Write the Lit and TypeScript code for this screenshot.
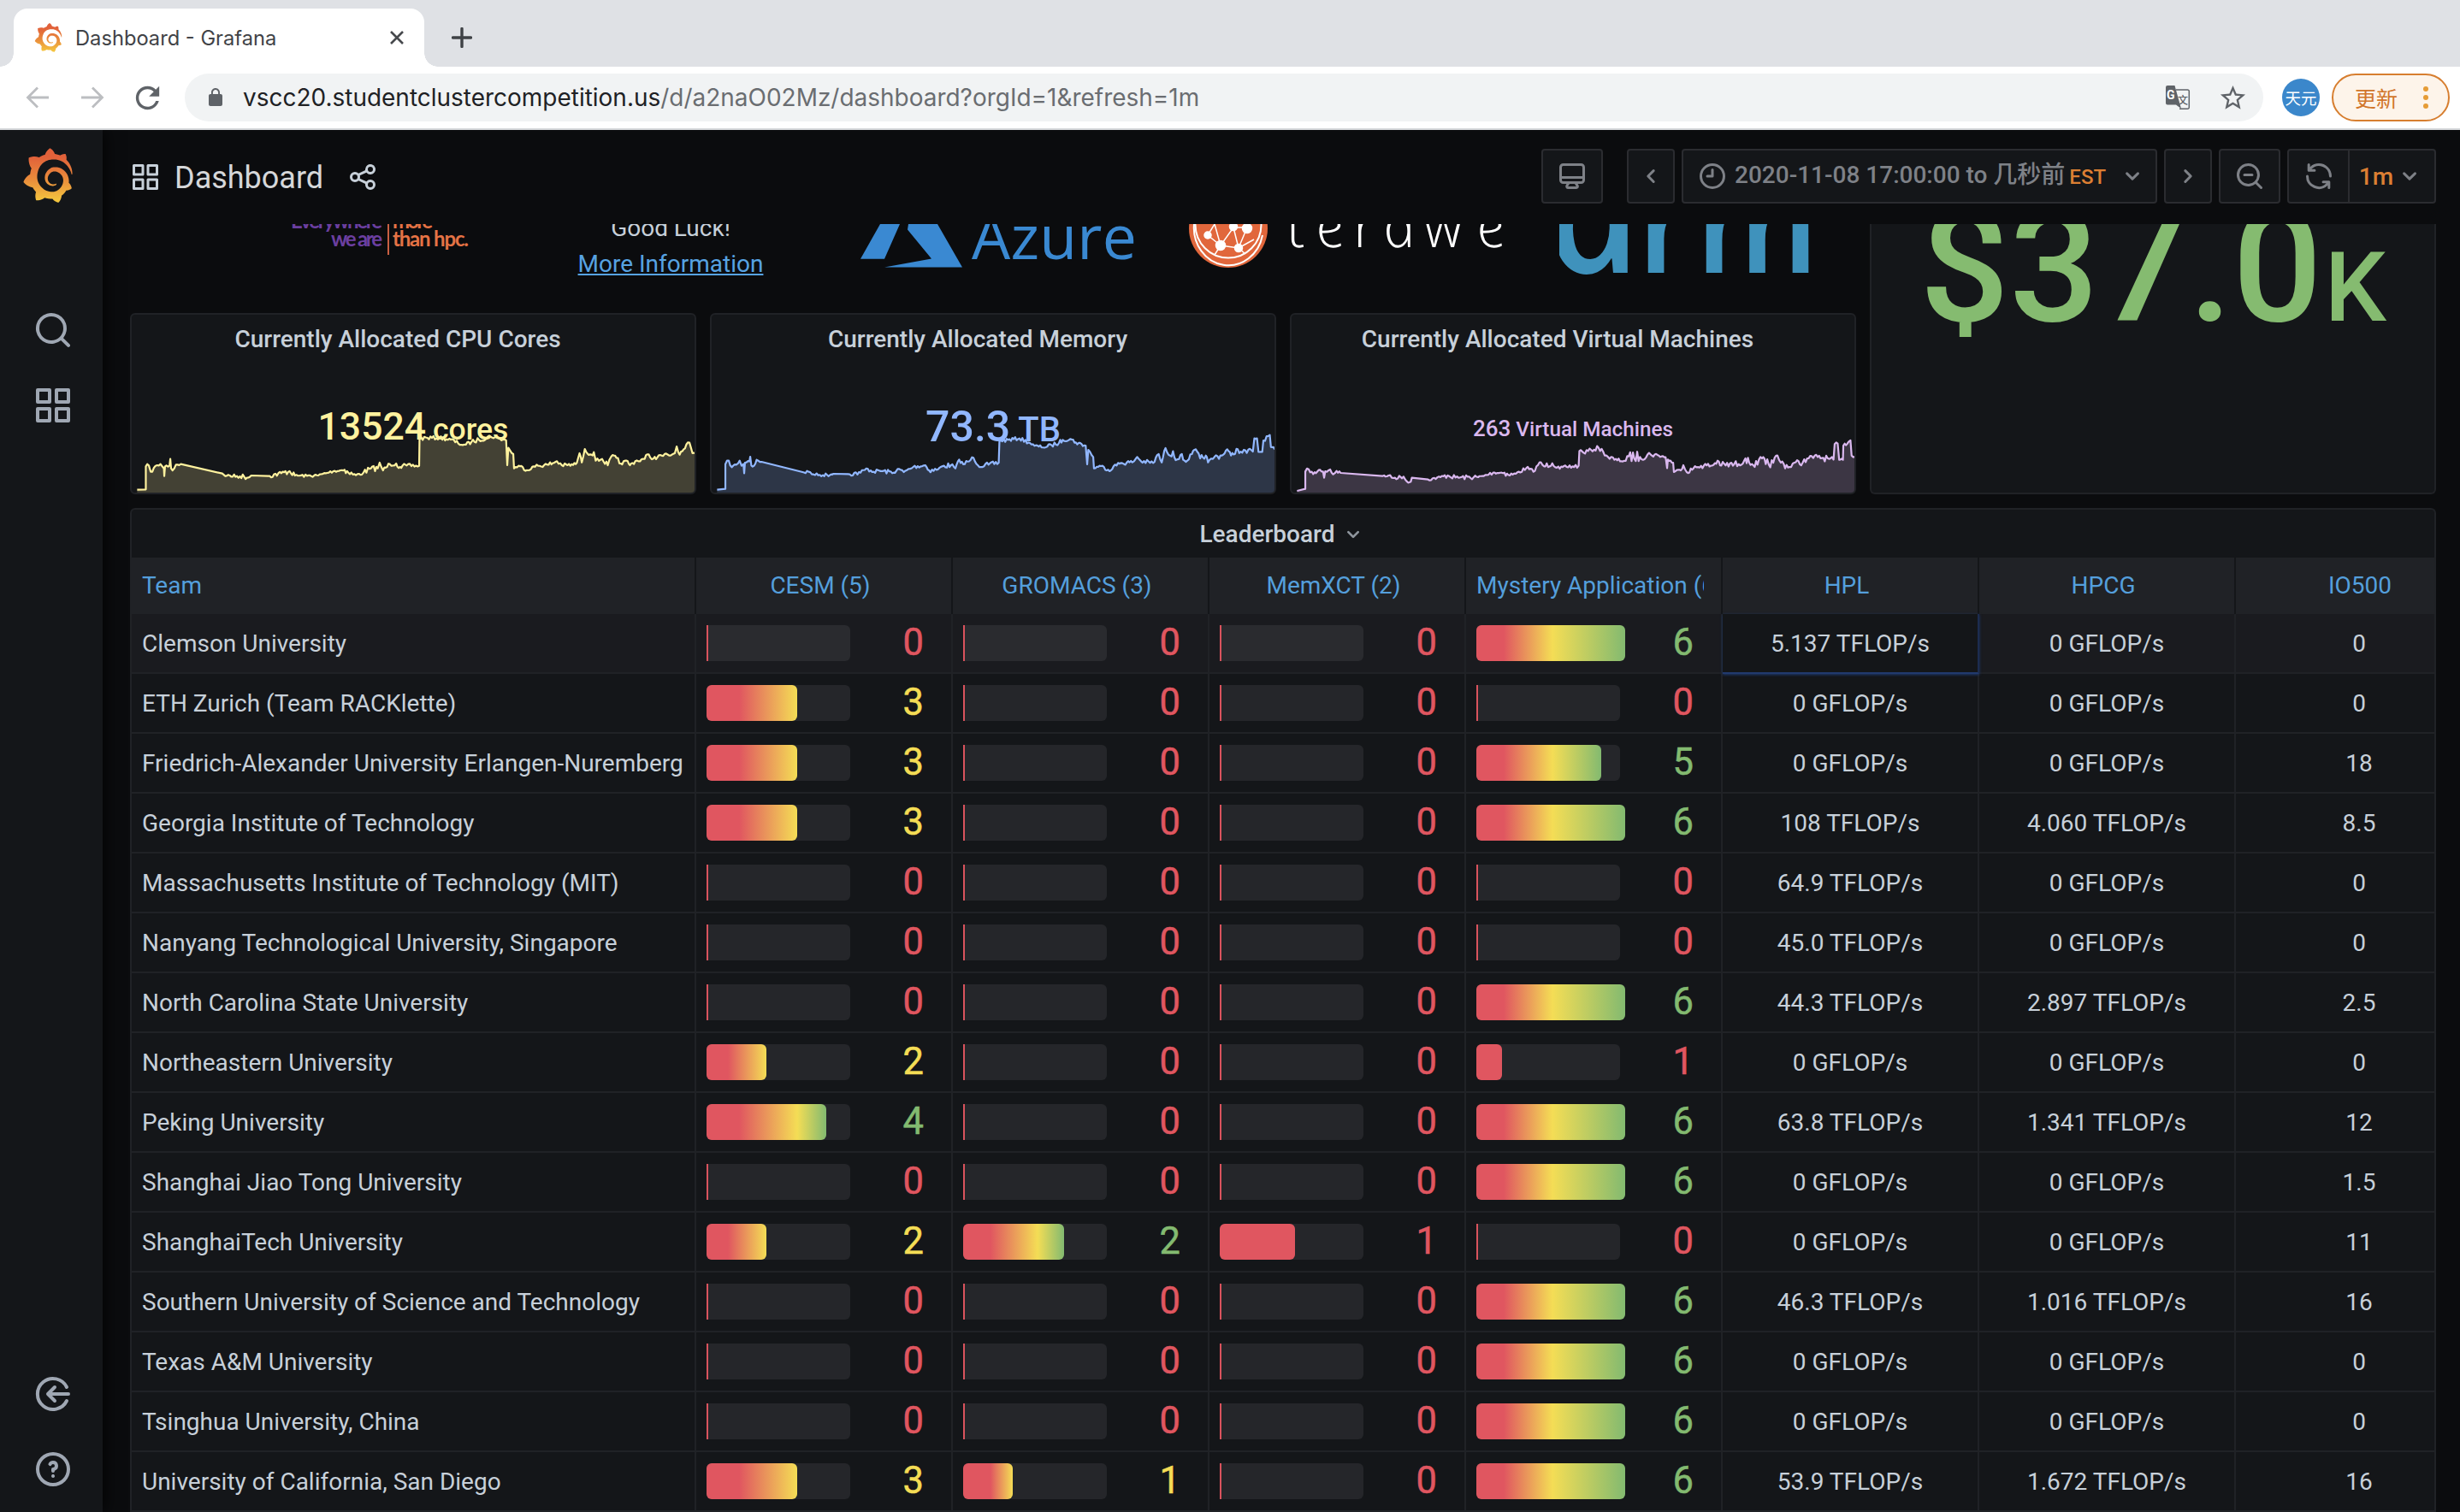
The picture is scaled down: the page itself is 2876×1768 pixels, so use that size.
import { LitElement, html, css, nothing } from 'lit';
import { customElement, property } from 'lit/decorators.js';

const ICONS: Record<string, string> = {
  apps: 'M10,13H3a1,1,0,0,0-1,1v7a1,1,0,0,0,1,1h7a1,1,0,0,0,1-1V14A1,1,0,0,0,10,13ZM9,20H4V15H9ZM21,2H14a1,1,0,0,0-1,1v7a1,1,0,0,0,1,1h7a1,1,0,0,0,1-1V3A1,1,0,0,0,21,2ZM20,9H15V4h5Zm1,4H14a1,1,0,0,0-1,1v7a1,1,0,0,0,1,1h7a1,1,0,0,0,1-1V14A1,1,0,0,0,21,13Zm-1,7H15V15h5ZM10,2H3A1,1,0,0,0,2,3v7a1,1,0,0,0,1,1h7a1,1,0,0,0,1-1V3A1,1,0,0,0,10,2ZM9,9H4V4H9Z',
  search: 'M21.71,20.29,18,16.61A9,9,0,1,0,16.61,18l3.68,3.68a1,1,0,0,0,1.42,0A1,1,0,0,0,21.71,20.29ZM11,18a7,7,0,1,1,7-7A7,7,0,0,1,11,18Z',
  zoomOut: 'M21.71,20.29,18,16.61A9,9,0,1,0,16.61,18l3.68,3.68a1,1,0,0,0,1.42,0A1,1,0,0,0,21.71,20.29ZM11,18a7,7,0,1,1,7-7A7,7,0,0,1,11,18ZM14,10H8a1,1,0,0,0,0,2h6a1,1,0,0,0,0-2Z',
  help: 'M11.29,15.29a1.58,1.58,0,0,0-.12.15.76.76,0,0,0-.09.18.64.64,0,0,0-.06.18,1.36,1.36,0,0,0,0,.2.84.84,0,0,0,.08.38.9.9,0,0,0,.54.54.94.94,0,0,0,.76,0,.9.9,0,0,0,.54-.54A1,1,0,0,0,13,16a1,1,0,0,0-.29-.71A1,1,0,0,0,11.29,15.29ZM12,2A10,10,0,1,0,22,12,10,10,0,0,0,12,2Zm0,18a8,8,0,1,1,8-8A8,8,0,0,1,12,20ZM12,7A3,3,0,0,0,9.4,8.5a1,1,0,1,0,1.73,1A1,1,0,0,1,12,9a1,1,0,0,1,0,2,1,1,0,0,0-1,1v1a1,1,0,0,0,2,0v-.18A3,3,0,0,0,12,7Z',
  share: 'M18,14a4,4,0,0,0-3.08,1.48l-5.1-2.35a3.64,3.64,0,0,0,0-2.26l5.1-2.35A4,4,0,1,0,14,6a4.17,4.17,0,0,0,.07.71L8.79,9.14a4,4,0,1,0,0,5.72l5.28,2.43A4.17,4.17,0,0,0,14,18a4,4,0,1,0,4-4ZM18,4a2,2,0,1,1-2,2A2,2,0,0,1,18,4ZM6,14a2,2,0,1,1,2-2A2,2,0,0,1,6,14Zm12,6a2,2,0,1,1,2-2A2,2,0,0,1,18,20Z',
  clock: 'M12,2A10,10,0,1,0,22,12,10,10,0,0,0,12,2Zm0,18a8,8,0,1,1,8-8A8,8,0,0,1,12,20ZM12,6a1,1,0,0,0-1,1v4H8a1,1,0,0,0,0,2h4a1,1,0,0,0,1-1V7A1,1,0,0,0,12,6Z',
  monitor: 'M19,2H5A3,3,0,0,0,2,5V15a3,3,0,0,0,3,3H7.64l-.58,1a2,2,0,0,0,0,2,2,2,0,0,0,1.75,1h6.46A2,2,0,0,0,17,21a2,2,0,0,0,0-2l-.59-1H19a3,3,0,0,0,3-3V5A3,3,0,0,0,19,2ZM8.77,20,10,18H14l1.2,2ZM20,15a1,1,0,0,1-1,1H5a1,1,0,0,1-1-1V14H20Zm0-3H4V5A1,1,0,0,1,5,4H19a1,1,0,0,1,1,1Z',
  sync: 'M19.91,15.51H15.38a1,1,0,0,0,0,2h2.4A8,8,0,0,1,4,12a1,1,0,1,0-2,0,10,10,0,0,0,16.88,7.23V21a1,1,0,0,0,2,0V16.5A1,1,0,0,0,19.91,15.51ZM12,2A10,10,0,0,0,5.12,4.77V3a1,1,0,0,0-2,0V7.5a1,1,0,0,0,1,1h4.5a1,1,0,0,0,0-2H6.22A8,8,0,0,1,20,12a1,1,0,0,0,2,0A10,10,0,0,0,12,2Z',
  down: 'M17,9.17a1,1,0,0,0-1.41,0L12,12.71,8.46,9.17a1,1,0,0,0-1.41,0,1,1,0,0,0,0,1.42l4.24,4.24a1,1,0,0,0,1.42,0L17,10.59A1,1,0,0,0,17,9.17Z',
  left: 'M11.29,12l3.54-3.54a1,1,0,0,0,0-1.41,1,1,0,0,0-1.42,0L9.17,11.29a1,1,0,0,0,0,1.42L13.41,17a1,1,0,0,0,1.42,0,1,1,0,0,0,0-1.41Z',
  right: 'M12.71,12l-3.54-3.54a1,1,0,0,1,0-1.41,1,1,0,0,1,1.42,0L14.83,11.29a1,1,0,0,1,0,1.42L10.59,17a1,1,0,0,1-1.42,0,1,1,0,0,1,0-1.41Z',
  lock: 'M18 8h-1V6c0-2.76-2.24-5-5-5S7 3.24 7 6v2H6c-1.1 0-2 .9-2 2v10c0 1.1.9 2 2 2h12c1.1 0 2-.9 2-2V10c0-1.1-.9-2-2-2zM15.1 8H8.9V6c0-1.71 1.39-3.1 3.1-3.1s3.1 1.39 3.1 3.1v2z',
  star: 'M22 9.24l-7.19-.62L12 2 9.19 8.63 2 9.24l5.46 4.73L5.82 21 12 17.27 18.18 21l-1.63-7.03L22 9.24zM12 15.4l-3.76 2.27 1-4.28-3.32-2.88 4.38-.38L12 6.1l1.71 4.04 4.38.38-3.32 2.88 1 4.28L12 15.4z',
  reload: 'M17.65 6.35C16.2 4.9 14.21 4 12 4c-4.42 0-7.99 3.58-7.99 8s3.57 8 7.99 8c3.73 0 6.84-2.55 7.73-6h-2.08c-.82 2.33-3.04 4-5.65 4-3.31 0-6-2.69-6-6s2.69-6 6-6c1.66 0 3.14.69 4.22 1.78L13 11h7V4l-2.35 2.35z',
};

const GRAFANA_MARK =
  'M342,161.2c-0.6-6.1-1.6-13.1-3.6-20.9c-2-7.7-5-16.2-9.4-25c-4.4-8.8-10.1-17.9-17.5-26.8c-2.9-3.5-6.1-6.9-9.5-10.2c5.1-20.3-6.2-37.9-6.2-37.9c-19.5-1.2-31.9,6.1-36.5,9.4c-0.8-0.3-1.5-0.7-2.3-1c-3.3-1.3-6.7-2.6-10.3-3.7c-3.5-1.1-7.1-2.1-10.8-3c-3.7-0.9-7.4-1.6-11.2-2.2c-0.7-0.1-1.3-0.2-2-0.3c-8.5-27.2-32.9-38.6-32.9-38.6c-27.3,17.3-32.4,41.5-32.4,41.5s-0.1,0.5-0.3,1.4c-1.5,0.4-3,0.9-4.5,1.3c-2.1,0.6-4.2,1.4-6.2,2.2c-2.1,0.8-4.1,1.6-6.2,2.5c-4.1,1.8-8.2,3.8-12.2,6c-3.9,2.2-7.7,4.6-11.4,7.1c-0.5-0.2-1-0.4-1-0.4c-37.8-14.4-71.3,2.9-71.3,2.9c-3.1,40.2,15.1,65.5,18.7,70.1c-0.9,2.5-1.7,5-2.5,7.5c-2.8,9.1-4.9,18.4-6.2,28.1c-0.2,1.4-0.4,2.8-0.5,4.2C18.8,192.7,8.5,228,8.5,228c29.1,33.5,63.1,35.6,63.1,35.6c0,0,0.1-0.1,0.1-0.1c4.3,7.7,9.3,15,14.9,21.9c2.4,2.9,4.8,5.6,7.4,8.3c-10.6,30.4,1.5,55.6,1.5,55.6c32.4,1.2,53.7-14.2,58.2-17.7c3.2,1.1,6.5,2.1,9.8,2.9c10,2.6,20.2,4.1,30.4,4.5c2.5,0.1,5.1,0.2,7.6,0.1l1.2,0l0.8,0l1.6,0l1.6-0.1l0,0.1c15.3,21.8,42.1,24.9,42.1,24.9c19.1-20.1,20.2-40.1,20.2-44.4l0,0c0,0,0-0.1,0-0.3c0-0.4,0-0.6,0-0.6l0,0c0-0.3,0-0.6,0-0.9c4-2.8,7.8-5.8,11.4-9.1c7.6-6.9,14.3-14.8,19.9-23.3c0.5-0.8,1-1.6,1.5-2.4c21.6,1.2,36.9-13.4,36.9-13.4c-3.6-22.5-16.4-33.5-19.1-35.6l0,0c0,0-0.1-0.1-0.3-0.2c-0.2-0.1-0.2-0.2-0.2-0.2c0,0,0,0,0,0c-0.1-0.1-0.3-0.2-0.5-0.3c0.1-1.4,0.2-2.7,0.3-4.1c0.2-2.4,0.2-4.9,0.2-7.3l0-1.8l0-0.9l0-0.5c0-0.6,0-0.4,0-0.6l-0.1-1.5l-0.1-2c0-0.7-0.1-1.3-0.2-1.9c-0.1-0.6-0.1-1.3-0.2-1.9l-0.2-1.9l-0.3-1.9c-0.4-2.5-0.8-4.9-1.4-7.4c-2.3-9.7-6.1-18.9-11-27.2c-5-8.3-11.2-15.6-18.3-21.8c-7-6.2-14.9-11.2-23.1-14.9c-8.3-3.7-16.9-6.1-25.5-7.2c-4.3-0.6-8.6-0.8-12.9-0.7l-1.6,0l-0.4,0c-0.1,0-0.6,0-0.5,0l-0.7,0l-1.6,0.1c-0.6,0-1.2,0.1-1.7,0.1c-2.2,0.2-4.4,0.5-6.5,0.9c-8.6,1.6-16.7,4.7-23.8,9c-7.1,4.3-13.3,9.6-18.3,15.6c-5,6-8.9,12.7-11.6,19.6c-2.7,6.9-4.2,14.1-4.6,21c-0.1,1.7-0.1,3.5-0.1,5.2c0,0.4,0,0.9,0,1.3l0.1,1.4c0.1,0.8,0.1,1.7,0.2,2.5c0.3,3.5,1,6.9,1.9,10.1c1.9,6.5,4.9,12.4,8.6,17.4c3.7,5,8.2,9.1,12.9,12.4c4.7,3.2,9.8,5.5,14.8,7c5,1.5,10,2.1,14.7,2.1c0.6,0,1.2,0,1.7,0c0.3,0,0.6,0,0.9,0c0.3,0,0.6,0,0.9-0.1c0.5,0,1-0.1,1.5-0.1c0.1,0,0.3,0,0.4-0.1l0.5-0.1c0.3,0,0.6-0.1,0.9-0.1c0.6-0.1,1.1-0.2,1.7-0.3c0.6-0.1,1.1-0.2,1.6-0.4c1.1-0.2,2.1-0.6,3.1-0.9c2-0.7,4-1.5,5.7-2.4c1.8-0.9,3.4-2,5-3c0.4-0.3,0.9-0.6,1.3-1c1.6-1.3,1.9-3.7,0.6-5.3c-1.1-1.4-3.1-1.8-4.7-0.9c-0.4,0.2-0.8,0.4-1.2,0.6c-1.4,0.7-2.8,1.3-4.3,1.8c-1.5,0.5-3.1,0.9-4.7,1.2c-0.8,0.1-1.6,0.2-2.5,0.3c-0.4,0-0.8,0.1-1.3,0.1c-0.4,0-0.9,0-1.2,0c-0.4,0-0.8,0-1.2,0c-0.5,0-1,0-1.5-0.1c0,0-0.3,0-0.1,0l-0.2,0l-0.3,0c-0.2,0-0.5,0-0.7-0.1c-0.5-0.1-0.9-0.1-1.4-0.2c-3.7-0.5-7.4-1.6-10.9-3.2c-3.6-1.6-7-3.8-10.1-6.6c-3.1-2.8-5.8-6.1-7.9-9.9c-2.1-3.8-3.6-8-4.3-12.4c-0.3-2.2-0.5-4.5-0.4-6.7c0-0.6,0.1-1.2,0.1-1.8c0,0.2,0-0.1,0-0.1l0-0.2l0-0.5c0-0.3,0.1-0.6,0.1-0.9c0.1-1.2,0.3-2.4,0.5-3.6c1.7-9.6,6.5-19,13.9-26.1c1.9-1.8,3.9-3.4,6-4.9c2.1-1.5,4.4-2.8,6.8-3.9c2.4-1.1,4.8-2,7.4-2.7c2.5-0.7,5.1-1.1,7.8-1.4c1.3-0.1,2.6-0.2,4-0.2c0.4,0,0.6,0,0.9,0l1.1,0l0.7,0c0.3,0,0,0,0.1,0l0.3,0l1.1,0.1c2.9,0.2,5.7,0.6,8.5,1.3c5.6,1.2,11.1,3.3,16.2,6.1c10.2,5.7,18.9,14.5,24.2,25.1c2.7,5.3,4.6,11,5.5,16.9c0.2,1.5,0.4,3,0.5,4.5l0.1,1.1l0.1,1.1c0,0.4,0,0.8,0,1.1c0,0.4,0,0.8,0,1.1l0,1l0,1.1c0,0.7-0.1,1.9-0.1,2.6c-0.1,1.6-0.3,3.3-0.5,4.9c-0.2,1.6-0.5,3.2-0.8,4.8c-0.3,1.6-0.7,3.2-1.1,4.7c-0.8,3.1-1.8,6.2-3,9.3c-2.4,6-5.6,11.8-9.4,17.1c-7.7,10.6-18.2,19.2-30.2,24.7c-6,2.7-12.3,4.7-18.8,5.7c-3.2,0.6-6.5,0.9-9.8,1l-0.6,0l-0.5,0l-1.1,0l-1.6,0l-0.8,0c0.4,0-0.1,0-0.1,0l-0.3,0c-1.8,0-3.5-0.1-5.3-0.3c-7-0.5-13.9-1.8-20.7-3.7c-6.7-1.9-13.2-4.6-19.4-7.8c-12.3-6.6-23.4-15.6-32-26.5c-4.3-5.4-8.1-11.3-11.2-17.4c-3.1-6.1-5.6-12.6-7.4-19.1c-1.8-6.6-2.9-13.3-3.4-20.1l-0.1-1.3l0-0.3l0-0.3l0-0.6l0-1.1l0-0.3l0-0.4l0-0.8l0-1.6l0-0.3c0,0,0,0.1,0-0.1l0-0.6c0-0.8,0-1.7,0-2.5c0.1-3.3,0.4-6.8,0.8-10.2c0.4-3.4,1-6.9,1.7-10.3c0.7-3.4,1.5-6.8,2.5-10.2c1.9-6.7,4.3-13.2,7.1-19.3c5.7-12.2,13.1-23.1,22-31.8c2.2-2.2,4.5-4.2,6.9-6.2c2.4-1.9,4.9-3.7,7.5-5.4c2.5-1.7,5.2-3.2,7.9-4.6c1.3-0.7,2.7-1.4,4.1-2c0.7-0.3,1.4-0.6,2.1-0.9c0.7-0.3,1.4-0.6,2.1-0.9c2.8-1.2,5.7-2.2,8.7-3.1c0.7-0.2,1.5-0.4,2.2-0.7c0.7-0.2,1.5-0.4,2.2-0.6c1.5-0.4,3-0.8,4.5-1.1c0.7-0.2,1.5-0.3,2.3-0.5c0.8-0.2,1.5-0.3,2.3-0.5c0.8-0.1,1.5-0.3,2.3-0.4l1.1-0.2l1.2-0.2c0.8-0.1,1.5-0.2,2.3-0.3c0.9-0.1,1.7-0.2,2.6-0.3c0.7-0.1,1.9-0.2,2.6-0.3c0.5-0.1,1.1-0.1,1.6-0.2l1.1-0.1l0.5-0.1l0.6,0c0.9-0.1,1.7-0.1,2.6-0.2l1.3-0.1c0,0,0.5,0,0.1,0l0.3,0l0.6,0c0.7,0,1.5-0.1,2.2-0.1c2.9-0.1,5.9-0.1,8.8,0c5.8,0.2,11.5,0.9,17,1.9c11.1,2.1,21.5,5.6,31,10.3c9.5,4.6,17.9,10.3,25.3,16.5c0.5,0.4,0.9,0.8,1.4,1.2c0.4,0.4,0.9,0.8,1.3,1.2c0.9,0.8,1.7,1.6,2.6,2.4c0.9,0.8,1.7,1.6,2.5,2.4c0.8,0.8,1.6,1.6,2.4,2.5c3.1,3.3,6,6.6,8.6,10c5.2,6.7,9.4,13.5,12.7,19.9c0.2,0.4,0.4,0.8,0.6,1.2c0.2,0.4,0.4,0.8,0.6,1.2c0.4,0.8,0.8,1.6,1.1,2.4c0.4,0.8,0.7,1.5,1.1,2.3c0.3,0.8,0.7,1.5,1,2.3c1.2,3,2.4,5.9,3.3,8.6c1.5,4.4,2.6,8.3,3.5,11.7c0.3,1.4,1.6,2.3,3,2.1c1.5-0.1,2.6-1.3,2.6-2.8C342.6,170.4,342.5,166.1,342,161.2z';

const icon = (name: string, size: number) =>
  html`<svg class="icon" width=${size} height=${size} viewBox="0 0 24 24"><path fill="currentColor" d=${ICONS[name]} /></svg>`;

const grafanaMark = (w: number, h: number) => html`
  <svg class="icon" width=${w} height=${h} viewBox="0 0 351 365" preserveAspectRatio="none">
    <defs>
      <linearGradient id="gm" gradientUnits="userSpaceOnUse" x1="175" y1="360" x2="175" y2="60">
        <stop offset="0" stop-color="#f5c83f" />
        <stop offset="0.5" stop-color="#e98c3b" />
        <stop offset="1" stop-color="#e1613a" />
      </linearGradient>
    </defs>
    <path fill="url(#gm)" d=${GRAFANA_MARK} />
  </svg>`;

/* Sparkline key points: x, y and the jitter applied up to the next point. */
type Key = [number, number, number?];

const CPU: Key[] = [
  [19, 620, 0], [42, 619, 0], [42, 538, 4], [50, 535], [55, 557, 4], [72, 534, 4], [81, 530, 5], [90, 545, 0], [91, 572, 0], [93, 538, 4], [105, 535, 0], [107, 512, 0], [109, 545, 4], [113, 552, 4], [122, 532, 5], [135, 530, 0],
  [245, 563, 4], [257, 571, 4], [292, 573, 6], [318, 575, 4], [322, 570, 0], [367, 572, 5], [402, 562, 6], [424, 555, 5], [438, 570, 3], [470, 571, 3], [500, 570, 4], [520, 562, 3], [540, 555, 3], [570, 550, 6], [580, 560, 5], [600, 569, 4], [620, 560, 6], [640, 545, 6], [658, 545, 3], [663, 525, 4], [672, 552, 5], [690, 530, 5], [707, 528, 6], [717, 540, 5], [735, 535, 4],
  [768, 536, 0], [769, 440, 5], [790, 438, 4], [822, 438, 4], [852, 444, 5], [872, 458, 4], [892, 462, 4], [907, 452, 5], [927, 445, 5], [957, 433, 3], [982, 440, 4], [999, 447, 0], [1002, 534, 0], [1005, 473, 4], [1018, 495, 0], [1020, 545, 3], [1032, 536, 4], [1058, 552, 2], [1072, 538, 4], [1112, 532, 6], [1134, 520, 5], [1147, 534, 4], [1177, 533, 5], [1187, 525, 4], [1194, 492, 3], [1200, 524, 3], [1208, 477, 5], [1222, 496, 6], [1232, 488, 3], [1237, 518, 4], [1254, 512, 5], [1269, 534, 4], [1278, 504, 5], [1292, 508, 6], [1300, 528, 4], [1322, 520, 5], [1328, 534, 4], [1342, 520, 5], [1367, 512, 4], [1374, 496, 4], [1390, 511, 4], [1412, 500, 5], [1432, 500, 4], [1447, 492, 4], [1452, 468, 3], [1460, 497, 4], [1474, 475, 5], [1486, 455, 2], [1494, 492, 1], [1500, 492],
];

const MEMORY: Key[] = [
  [19, 620, 0], [41, 617, 0], [41, 530, 4], [50, 518, 4], [58, 541, 4], [70, 532, 4], [79, 518, 4], [84, 536, 4], [89, 530, 0], [91, 562, 0], [93, 525, 4], [105, 520, 0], [107, 504, 0], [110, 535, 4], [117, 536, 4], [124, 515, 5], [137, 522, 0],
  [246, 558, 4], [262, 557, 4], [275, 566, 3], [300, 569, 4], [322, 566, 3], [328, 564, 0], [367, 565, 5], [400, 560, 5], [419, 546, 5], [435, 557, 4], [450, 553, 5], [488, 560, 3], [502, 547, 4], [515, 558, 4], [540, 540, 4], [572, 534, 6], [582, 552, 5], [602, 550, 4], [622, 536, 6], [640, 534, 5], [652, 545, 3], [662, 514, 4], [673, 531, 5], [692, 516, 5], [700, 508, 3], [712, 535, 5], [740, 532, 5],
  [767, 525, 0], [769, 448, 5], [792, 445, 4], [822, 440, 4], [850, 456, 3], [862, 466, 3], [892, 471, 4], [907, 463, 5], [927, 456, 5], [937, 445, 4], [957, 442, 5], [972, 454, 4], [998, 465, 0], [1002, 531, 0], [1005, 480, 4], [1018, 505, 0], [1020, 545, 2], [1035, 536, 4], [1065, 552, 2], [1072, 538, 4], [1092, 526, 5], [1122, 524, 5], [1135, 505, 4], [1145, 520, 5], [1177, 526, 6], [1192, 495, 8], [1200, 524, 5], [1210, 474, 6], [1222, 500, 8], [1230, 485, 4], [1237, 516, 6], [1250, 498, 6], [1264, 522, 4], [1280, 495, 8], [1294, 486, 4], [1302, 510, 6], [1317, 500, 6], [1323, 524, 4], [1340, 505, 6], [1360, 500, 4], [1374, 478, 4], [1384, 500, 5], [1402, 478, 7], [1414, 490, 8], [1442, 486, 4], [1446, 440, 3], [1453, 440, 2], [1457, 487, 3], [1467, 487, 2], [1470, 447, 4], [1487, 428, 2], [1490, 470, 3], [1500, 478],
];

const VMS: Key[] = [
  [19, 624, 0], [41, 617, 0], [41, 556, 4], [50, 548, 4], [62, 565, 4], [80, 550, 4], [88, 556, 0], [91, 578, 0], [94, 555, 5], [107, 549, 5], [115, 566, 4], [124, 554, 4], [135, 561, 0],
  [246, 572, 4], [262, 570, 3], [275, 579, 4], [302, 574, 4], [314, 595, 2], [321, 592, 0], [324, 578, 0], [367, 584, 3], [400, 576, 5], [419, 570, 5], [440, 577, 5], [500, 576, 4], [515, 572, 4], [540, 560, 3], [570, 560, 6], [580, 568, 4], [600, 564, 4], [628, 544, 5], [647, 557, 3], [663, 524, 4], [675, 538, 6], [697, 527, 5], [717, 546, 4], [735, 540, 5],
  [767, 536, 0], [769, 484, 6], [780, 490, 4], [800, 480, 5], [820, 473, 5], [832, 486, 5], [845, 505, 7], [862, 515, 4], [892, 519, 6], [900, 503, 12], [930, 505, 8], [958, 496, 5], [980, 500, 3], [998, 506, 0], [1002, 544, 0], [1004, 514, 3], [1018, 525, 0], [1020, 558, 3], [1035, 550, 5], [1045, 534, 5], [1054, 558, 5], [1072, 545, 5], [1092, 536, 6], [1122, 535, 8], [1136, 518, 6], [1146, 535, 8], [1192, 530, 8], [1210, 510, 8], [1220, 525, 8], [1242, 532, 9], [1254, 510, 9], [1264, 530, 10], [1284, 525, 8], [1295, 500, 6], [1304, 525, 8], [1327, 540, 6], [1340, 525, 6], [1362, 525, 6], [1374, 510, 6], [1402, 505, 7], [1432, 512, 5], [1444, 514, 2], [1447, 460, 3], [1455, 458, 2], [1459, 515, 3], [1469, 515, 2], [1470, 465, 4], [1484, 452, 2], [1489, 447, 1], [1492, 500, 3], [1500, 505],
];

function trace(keys: Key[]): string {
  let seed = 7;
  const rnd = () => ((seed = (seed * 16807) % 2147483647) / 2147483647) * 2 - 1;
  const out: string[] = [];
  for (let i = 0; i < keys.length - 1; i++) {
    const [x0, y0, jitter = 4] = keys[i];
    const [x1, y1] = keys[i + 1];
    const steps = jitter ? Math.max(1, Math.round((x1 - x0) / 4)) : 1;
    for (let s = 0; s < steps; s++) {
      const t = s / steps;
      const n = s ? rnd() * jitter * 1.6 : 0;
      out.push(`${(x0 + (x1 - x0) * t).toFixed(1)},${(y0 + (y1 - y0) * t + n).toFixed(1)}`);
    }
  }
  const last = keys[keys.length - 1];
  out.push(`${last[0]},${last[1]}`);
  return out.join(' ');
}

@customElement('stat-panel')
class StatPanel extends LitElement {
  @property() heading = '';
  @property() value = '';
  @property() unit = '';
  @property() tone = '';
  @property({ attribute: false }) keys: Key[] = [];

  static styles = css`
    :host { display: block; }
    .panel { position: relative; box-sizing: border-box; height: 212px; border: 2px solid #202226; border-radius: 6px; background: #141619; overflow: hidden; }
    .spark { position: absolute; left: -2px; top: -2px; width: 662px; height: 212px; }
    .title { height: 56px; line-height: 58px; padding-right: 36px; text-align: center; font-size: 28px; font-weight: 500; color: #c7d0d9; }
    .reading { position: relative; display: flex; justify-content: center; align-items: baseline; height: 122px; font-weight: 500; line-height: 122px; white-space: pre; }
    .cpu { color: #fff29e; } .memory { color: #91b7ff; } .vms { color: #dab8ef; }
    .cpu .num { font-size: 44.5px; } .cpu .unit { font-size: 35.6px; margin-left: 8px; }
    .memory .num { font-size: 50px; } .memory .unit { font-size: 40px; margin-left: 9px; }
    .vms .num { font-size: 26px; } .vms .unit { font-size: 24.3px; margin-left: 6px; }
    .cpu .reading { padding-top: 14px; } .memory .reading { padding-top: 14px; } .vms .reading { padding-top: 16px; }
    .line { fill: none; stroke: currentColor; stroke-width: 2.2; vector-effect: non-scaling-stroke; stroke-linejoin: round; }
    .area { fill: currentColor; fill-opacity: 0.2; }
  `;

  render() {
    const pts = trace(this.keys);
    return html`<div class="panel ${this.tone}">
      <svg class="spark" viewBox="0 0 1504 636" preserveAspectRatio="none">
        <polygon class="area" points="19,630 ${pts} 1500,630" />
        <polyline class="line" points=${pts} />
      </svg>
      <div class="title">${this.heading}</div>
      <div class="reading"><span class="num">${this.value}</span><span class="unit">${this.unit}</span></div>
    </div>`;
  }
}

type Tone = 'r' | 'y' | 'g';
interface Gauge { v: number; w: number; tone: Tone; }

const RED = '#e05660', YELLOW = '#f4dd55', GREEN = '#83ba70';
const Z: Gauge = { v: 0, w: 0, tone: 'r' };
const C2: Gauge = { v: 2, w: 70, tone: 'y' };
const C3: Gauge = { v: 3, w: 106, tone: 'y' };
const C4: Gauge = { v: 4, w: 140, tone: 'g' };
const G1: Gauge = { v: 1, w: 58, tone: 'y' };
const G2: Gauge = { v: 2, w: 118, tone: 'g' };
const M1: Gauge = { v: 1, w: 88, tone: 'r' };
const A1: Gauge = { v: 1, w: 30, tone: 'r' };
const A5: Gauge = { v: 5, w: 146, tone: 'g' };
const A6: Gauge = { v: 6, w: 174, tone: 'g' };

function fill(g: Gauge, col: number): string {
  if (g.tone === 'r') return RED;
  if (g.tone === 'y') return `linear-gradient(90deg, ${RED} ${col === 1 ? 55 : 36}%, ${YELLOW} 100%)`;
  const mid = [106, 87, 87, 89][col];
  return `linear-gradient(90deg, ${RED} ${col === 0 ? 38 : 32}px, ${YELLOW} ${mid}px, ${GREEN} 100%)`;
}

const ROWS: [string, Gauge, Gauge, Gauge, Gauge, string, string, string][] = [
  ['Clemson University', Z, Z, Z, A6, '5.137 TFLOP/s', '0 GFLOP/s', '0'],
  ['ETH Zurich (Team RACKlette)', C3, Z, Z, Z, '0 GFLOP/s', '0 GFLOP/s', '0'],
  ['Friedrich-Alexander University Erlangen-Nuremberg', C3, Z, Z, A5, '0 GFLOP/s', '0 GFLOP/s', '18'],
  ['Georgia Institute of Technology', C3, Z, Z, A6, '108 TFLOP/s', '4.060 TFLOP/s', '8.5'],
  ['Massachusetts Institute of Technology (MIT)', Z, Z, Z, Z, '64.9 TFLOP/s', '0 GFLOP/s', '0'],
  ['Nanyang Technological University, Singapore', Z, Z, Z, Z, '45.0 TFLOP/s', '0 GFLOP/s', '0'],
  ['North Carolina State University', Z, Z, Z, A6, '44.3 TFLOP/s', '2.897 TFLOP/s', '2.5'],
  ['Northeastern University', C2, Z, Z, A1, '0 GFLOP/s', '0 GFLOP/s', '0'],
  ['Peking University', C4, Z, Z, A6, '63.8 TFLOP/s', '1.341 TFLOP/s', '12'],
  ['Shanghai Jiao Tong University', Z, Z, Z, A6, '0 GFLOP/s', '0 GFLOP/s', '1.5'],
  ['ShanghaiTech University', C2, G2, M1, Z, '0 GFLOP/s', '0 GFLOP/s', '11'],
  ['Southern University of Science and Technology', Z, Z, Z, A6, '46.3 TFLOP/s', '1.016 TFLOP/s', '16'],
  ['Texas A&M University', Z, Z, Z, A6, '0 GFLOP/s', '0 GFLOP/s', '0'],
  ['Tsinghua University, China', Z, Z, Z, A6, '0 GFLOP/s', '0 GFLOP/s', '0'],
  ['University of California, San Diego', C3, G1, Z, A6, '53.9 TFLOP/s', '1.672 TFLOP/s', '16'],
];

const HEADS = ['Team', 'CESM (5)', 'GROMACS (3)', 'MemXCT (2)', 'Mystery Application (6)', 'HPL', 'HPCG', 'IO500'];

@customElement('leader-board')
class LeaderBoard extends LitElement {
  static styles = css`
    :host { display: block; }
    .panel { box-sizing: border-box; height: 1176px; border: 2px solid #202226; border-bottom: 0; border-radius: 6px 6px 0 0; background: #141619; overflow: hidden; }
    .title { display: flex; justify-content: center; align-items: center; height: 56px; font-size: 28px; font-weight: 500; color: #c7d0d9; }
    .title svg { margin: 2px 0 0 5px; color: #8e959d; }
    .row { display: grid; grid-template-columns: 660px repeat(7, 300px); height: 70px; }
    .row > div { box-sizing: border-box; display: flex; align-items: center; border-right: 2px solid #202226; border-bottom: 2px solid #202226; padding: 0 12px; font-size: 28px; color: #c7d0d9; white-space: nowrap; }
    .row.head { height: 66px; background: #202226; }
    .row.head > div { border-right-color: #141619; border-bottom: 0; padding-right: 20px; padding-bottom: 2px; color: #549fdc; }
    .label { overflow: hidden; flex: 1; text-align: center; }
    .head .team .label { text-align: left; }
    .row .num { justify-content: center; }
    .row .num.last { padding-right: 22px; }
    .row.hover > div { background: #1a1b1f; }
    .row.hover > div.focus { background: #141619; position: relative; box-shadow: 0 1px 3px 0 #1f3a70; border-bottom-color: #213a6e; border-right-color: #1c2c50; }
    .track { box-sizing: border-box; width: 168px; height: 42px; border-radius: 6px; background: #25262a; }
    .hover .track { background: #2a2b2f; }
    .zero .track { border-left: 2px solid #d9535d; border-radius: 0 6px 6px 0; }
    .fill { height: 42px; border-radius: 6px; }
    .reading { flex: 1; text-align: right; padding-right: 20px; font-size: 43.5px; line-height: 42px; -webkit-text-stroke: 0.5px currentColor; }
    .r { color: #e05660; } .y { color: #f4dd55; } .g { color: #83ba70; }
  `;

  private gauge(g: Gauge, col: number) {
    return html`<div class=${g.v ? 'bar' : 'bar zero'}>
      <div class="track">${g.v ? html`<div class="fill" style="width:${g.w}px;background:${fill(g, col)}"></div>` : nothing}</div>
      <span class="reading ${g.tone}">${g.v}</span>
    </div>`;
  }

  render() {
    return html`<div class="panel">
      <div class="title"><span>Leaderboard</span>${icon('down', 32)}</div>
      <div class="row head">
        ${HEADS.map((h, i) => html`<div class=${i ? '' : 'team'}><span class="label">${h}</span></div>`)}
      </div>
      ${ROWS.map(([team, a, b, c, d, hpl, hpcg, io], i) => html`<div class="row ${i ? '' : 'hover'}">
        <div>${team}</div>
        ${[a, b, c, d].map((g, k) => this.gauge(g, k))}
        <div class="num ${i ? '' : 'focus'}">${hpl}</div>
        <div class="num">${hpcg}</div>
        <div class="num last">${io}</div>
      </div>`)}
    </div>`;
  }
}

@customElement('browser-chrome')
class BrowserChrome extends LitElement {
  static styles = css`
    :host { display: block; font-family: Inter, 'Noto Sans CJK SC', sans-serif; }
    .icon { display: block; flex: none; }
    .tabs { display: flex; height: 78px; background: #dfe1e5; }
    .tab { position: relative; box-sizing: border-box; display: flex; align-items: center; width: 480px; height: 68px; margin: 10px 0 0 16px; padding: 0 24px; border-radius: 16px 16px 0 0; background: #fff; }
    .foot { position: absolute; bottom: 0; width: 16px; height: 16px; }
    .foot.l { left: -16px; background: radial-gradient(circle at 0 0, #dfe1e5 15.5px, #fff 16px); }
    .foot.r { right: -16px; background: radial-gradient(circle at 100% 0, #dfe1e5 15.5px, #fff 16px); }
    .name { flex: 1; margin-left: 15px; font-size: 23.7px; color: #414347; }
    .plus { display: block; margin: 32px 0 0 32px; }
    .bar { box-sizing: border-box; display: flex; align-items: center; height: 74px; padding: 0 12px 0 24px; background: #fff; border-bottom: 2px solid #d5d7da; }
    .nav { display: flex; gap: 24px; width: 192px; color: #5f6368; align-items: center; }
    .off { color: #bcbec1; }
    .omni { box-sizing: border-box; display: flex; align-items: center; width: 2430px; height: 56px; padding: 0 18px 0 24px; border-radius: 28px; background: #f1f3f4; color: #5f6368; }
    .url { flex: 1; margin-left: 20px; font-size: 27.98px; color: #6a6d71; white-space: nowrap; }
    .url b { font-weight: 400; color: #202124; }
    .star { margin-left: 32px; }
    .avatar { display: grid; place-items: center; width: 44px; height: 44px; margin: 0 14px 0 22px; border-radius: 50%; background: #3b87cb; color: #fff; font-size: 18.5px; }
    .update { box-sizing: border-box; display: flex; align-items: center; justify-content: space-between; width: 138px; height: 56px; padding: 0 23px 0 25px; border: 2px solid #d77e2f; border-radius: 28px; background: #fdf4ea; color: #d1762b; font-size: 25px; }
  `;

  render() {
    return html`
      <div class="tabs">
        <div class="tab">
          <i class="foot l"></i><i class="foot r"></i>
          ${grafanaMark(33, 34)}
          <span class="name">Dashboard - Grafana</span>
          <svg class="icon" width="16" height="16" viewBox="0 0 16 16"><path d="M1 1L15 15M15 1L1 15" stroke="#47494d" stroke-width="2.6" /></svg>
        </div>
        <svg class="plus" width="24" height="24" viewBox="0 0 24 24"><path d="M12 1.500V22.500M1.500 12H22.500" stroke="#3f4246" stroke-width="3.400" stroke-linecap="round" /></svg>
      </div>
      <div class="bar">
        <div class="nav">
          <svg class="icon off" width="40" height="40" viewBox="0 0 40 40"><path d="M33 20H9M20 8.500L8.500 20L20 31.500" fill="none" stroke="currentColor" stroke-width="2.800" /></svg>
          <svg class="icon off" width="40" height="40" viewBox="0 0 40 40"><path d="M7 20H31M20 8.500L31.500 20L20 31.500" fill="none" stroke="currentColor" stroke-width="2.800" /></svg>
          ${icon('reload', 41)}
        </div>
        <div class="omni">
          ${icon('lock', 24)}
          <span class="url"><b>vscc20.studentclustercompetition.us</b>/d/a2naO02Mz/dashboard?orgId=1&amp;refresh=1m</span>
          <svg class="icon" width="30" height="30" viewBox="0 0 30 30">
            <path d="M13 6H26.500a1.800 1.800 0 0 1 1.800 1.800V26.500a1.800 1.800 0 0 1-1.800 1.800H17" fill="none" stroke="#5f6368" stroke-width="1.500" />
            <path d="M3 1H11.500L19 28L13 23.500H3a2 2 0 0 1-2-2V3a2 2 0 0 1 2-2Z" fill="#5f6368" />
            <text x="2" y="17" font-family="Roboto, sans-serif" font-weight="700" font-size="14" fill="#fff">G</text>
            <text x="15" y="23" font-family="'Noto Sans CJK SC', sans-serif" font-weight="500" font-size="12" fill="#5f6368">文</text>
          </svg>
          <span class="star">${icon('star', 35)}</span>
        </div>
        <div class="avatar">天元</div>
        <div class="update"><span>更新</span>
          <svg width="6" height="28" viewBox="0 0 6 28" fill="#e69c36"><circle cx="3" cy="4" r="3" /><circle cx="3" cy="14" r="3" /><circle cx="3" cy="24" r="3" /></svg>
        </div>
      </div>`;
  }
}

@customElement('app-root')
class AppRoot extends LitElement {
  static styles = css`
    :host { display: block; width: 2876px; height: 1768px; overflow: hidden; background: #0b0c0e; font-family: Roboto, 'Noto Sans CJK SC', sans-serif; }
    .icon { display: block; flex: none; }
    .app { display: flex; height: 1616px; overflow: hidden; }
    .side { box-sizing: border-box; display: flex; flex-direction: column; align-items: center; width: 120px; height: 1616px; padding: 21px 0 26px 4px; background: #141619; color: #9fa7b3; box-shadow: 0 0 20px #000; z-index: 1; flex: none; }
    .side .logo { margin-left: -12px; }
    .side .find { margin-top: 125px; }
    .side .grid { margin-top: 40px; }
    .side .exit { margin-top: auto; }
    .side .help { margin-top: 40px; }
    .main { flex: 1; padding: 0 28px 0 32px; overflow: hidden; }
    .top { display: flex; align-items: center; height: 108px; margin-bottom: 2px; color: #c7d0d9; }
    .top > .icon { margin-top: 2px; }
    .crumb { margin: 3px 0 0 16px; width: 202px; font-size: 36px; flex: none; color: #d5d7d9; }
    .spacer { flex: 1; }
    .btn { box-sizing: border-box; display: flex; align-items: center; justify-content: center; height: 64px; border: 2px solid #2b2c30; border-radius: 4px; background: #141619; color: #7e8187; font-size: 28px; font-weight: 500; white-space: nowrap; }
    .tv { width: 72px; margin-right: 28px; }
    .step { width: 56px; }
    .range { width: 556px; margin: 0 8px; justify-content: flex-start; padding: 0 9px 0 16px; }
    .range span { margin: -2px 0 0 8px; line-height: 34px; }
    .range em { flex: 1; margin: 1px 0 0 5px; font-style: normal; font-size: 24px; line-height: 30px; color: #dc7f33; }
    .zoom { width: 72px; margin: 0 8px; }
    .sync { width: 72px; border-radius: 4px 0 0 4px; border-right-width: 1px; }
    .every { width: 102px; border-radius: 0 4px 4px 0; border-left-width: 1px; color: #dc7f33; }
    .every svg { color: #7e8187; margin-left: 1px; }
    .grid4 { display: grid; grid-template-columns: repeat(4, 662px); grid-template-rows: 88px 212px; gap: 16px; margin-bottom: 16px; }
    .sponsors { grid-column: 1 / 4; display: flex; overflow: hidden; }
    .sponsors svg { display: block; flex: none; }
    .s-hpc { margin-left: 188px; }
    .s-text { width: 240px; margin: -16px 0 0 104px; text-align: center; font-size: 28px; line-height: 42px; color: #c7d0d9; }
    .s-text div { white-space: nowrap; }
    .s-text .link { color: #57a3e2; text-decoration: underline; }
    .s-azure { margin-left: 102px; }
    .s-terawe { margin-left: 54px; }
    .s-arm { margin-left: 60px; }
    .cost { box-sizing: border-box; grid-column: 4; grid-row: 1 / 3; border: 2px solid #202226; border-top: 0; border-radius: 0 0 6px 6px; background: #141619; overflow: hidden; color: #85bb70; font-weight: 500; }
    .sum { display: flex; justify-content: center; align-items: baseline; margin-top: -50px; line-height: 200px; }
    .sum span { font-size: 184.5px; }
    .sum small { font-size: 114px; margin-left: 3px; }
  `;

  render() {
    return html`
      <browser-chrome></browser-chrome>
      <div class="app">
        <nav class="side">
          <div class="logo">${grafanaMark(60, 64)}</div>
          <div class="find">${icon('search', 48)}</div>
          <div class="grid">${icon('apps', 48)}</div>
          <div class="exit">
            <svg class="icon" width="48" height="48" viewBox="0 0 24 24" fill="none" stroke="currentColor" stroke-width="2" stroke-linecap="round" stroke-linejoin="round">
              <path d="M20 8A9 9 0 1 0 20 16" /><path d="M21 12H9M13 8L9 12L13 16" />
            </svg>
          </div>
          <div class="help">${icon('help', 48)}</div>
        </nav>
        <div class="main">
          <div class="top">
            ${icon('apps', 36)}
            <span class="crumb">Dashboard</span>
            ${icon('share', 36)}
            <span class="spacer"></span>
            <div class="btn tv">${icon('monitor', 36)}</div>
            <div class="btn step">${icon('left', 36)}</div>
            <div class="btn range">${icon('clock', 36)}<span>2020-11-08 17:00:00 to 几秒前</span><em>EST</em>${icon('down', 36)}</div>
            <div class="btn step">${icon('right', 36)}</div>
            <div class="btn zoom">${icon('zoomOut', 36)}</div>
            <div class="btn sync">${icon('sync', 36)}</div>
            <div class="btn every">1m${icon('down', 36)}</div>
          </div>
          <div class="grid4">
            <div class="sponsors">
              <svg class="s-hpc" width="220" height="88" viewBox="340 262 220 88" font-family="Lato, sans-serif" font-size="24" font-weight="700">
                <text x="447" y="267" text-anchor="end" fill="#6b3fa0" textLength="107">Everywhere</text>
                <text x="447" y="288" text-anchor="end" fill="#6b3fa0" textLength="60">we are</text>
                <rect x="453" y="262" width="2" height="36" fill="#c95f42" />
                <text x="459" y="267" fill="#e57345" textLength="47">more</text>
                <text x="459" y="288" fill="#e57345" textLength="89">than hpc.</text>
              </svg>
              <div class="s-text"><div>Good Luck!</div><div class="link">More Information</div></div>
              <svg class="s-azure" width="330" height="88" viewBox="1006 262 330 88">
                <path fill="#3a89d2" d="M1029 262H1052L1034 302.700H1006ZM1062 262H1096L1125 312.500H1034L1089 302.500L1061 268.500Z" />
                <text x="1136" y="302.500" font-family="'Open Sans', sans-serif" font-size="71.500" fill="#3a89d2" textLength="193">Azure</text>
              </svg>
              <svg class="s-terawe" width="373" height="88" viewBox="1390 262 373 88">
                <circle cx="1436" cy="267" r="46" fill="#e1673c" />
                <circle cx="1436" cy="263" r="38.500" fill="none" stroke="#fff" stroke-width="2" />
                <path d="M1396 262A40.500 44 0 0 0 1476 275" fill="none" stroke="#fff" stroke-width="2" />
                <g stroke="#fff" stroke-width="1.500" fill="#fff">
                  <path fill="none" d="M1420 262L1427 287L1442 266H1458M1412 275L1420 262M1412 275L1427 287L1448 290L1458 266M1442 266L1448 290M1427 287L1420 298M1448 290L1456 297M1448 290L1466 280" />
                  <circle cx="1442" cy="265" r="4.500" /><circle cx="1458" cy="267" r="5.500" /><circle cx="1412" cy="275" r="4" />
                  <circle cx="1427" cy="287" r="5.500" /><circle cx="1448" cy="290" r="4.500" />
                </g>
                <g transform="translate(0 289) skewX(12)">
                  <text y="0" x="1508 1542 1586 1621 1669 1730" font-family="'Open Sans', sans-serif" font-style="italic" font-weight="300" font-size="67" fill="#fff">terawe</text>
                </g>
              </svg>
              <svg class="s-arm" width="300" height="88" viewBox="1823 262 300 88">
                <g transform="translate(0 319) skewX(12)">
                  <text y="0" x="1817 1923 1991" font-family="'Open Sans', sans-serif" font-style="italic" font-weight="600" font-size="163" fill="#3f92bc"><tspan font-size="192">a</tspan>rm</text>
                </g>
              </svg>
            </div>
            <div class="cost"><div class="sum"><span>$37.0</span><small>K</small></div></div>
            <stat-panel tone="cpu" heading="Currently Allocated CPU Cores" value="13524" unit="cores" .keys=${CPU}></stat-panel>
            <stat-panel tone="memory" heading="Currently Allocated Memory" value="73.3" unit="TB" .keys=${MEMORY}></stat-panel>
            <stat-panel tone="vms" heading="Currently Allocated Virtual Machines" value="263" unit="Virtual Machines" .keys=${VMS}></stat-panel>
          </div>
          <leader-board></leader-board>
        </div>
      </div>`;
  }
}
